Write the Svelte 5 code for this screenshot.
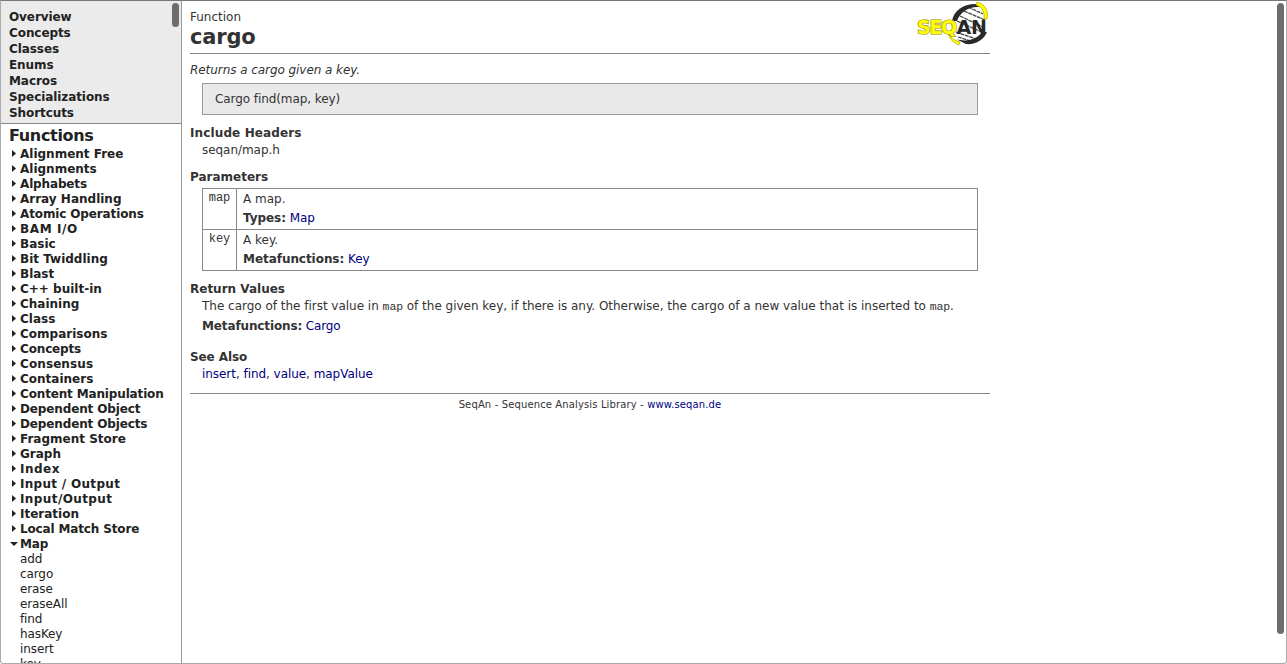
<script>
  const top = ['Overview', 'Concepts', 'Classes', 'Enums', 'Macros', 'Specializations', 'Shortcuts'];
  const groups = ['Alignment Free', 'Alignments', 'Alphabets', 'Array Handling', 'Atomic Operations', 'BAM I/O', 'Basic', 'Bit Twiddling', 'Blast', 'C++ built-in', 'Chaining', 'Class', 'Comparisons', 'Concepts', 'Consensus', 'Containers', 'Content Manipulation', 'Dependent Object', 'Dependent Objects', 'Fragment Store', 'Graph', 'Index', 'Input / Output', 'Input/Output', 'Iteration', 'Local Match Store', 'Map'];
  const spacing = { 'Atomic Operations': -0.13, 'BAM I/O': 0.6, 'Content Manipulation': -0.15, 'Dependent Object': -0.13, 'Dependent Objects': -0.13, 'Index': 0.5, 'Input / Output': 0.3, 'Input/Output': 0.4, 'Local Match Store': -0.15, 'Concepts': -0.15, 'Consensus': 0.1, 'Alphabets': -0.15, 'Map': -0.2 };
  const members = ['add', 'cargo', 'erase', 'eraseAll', 'find', 'hasKey', 'insert', 'key'];
  const params = [
    { name: 'map', text: 'A map.', label: 'Types:', link: 'Map' },
    { name: 'key', text: 'A key.', label: 'Metafunctions:', link: 'Key' }
  ];
  const related = ['insert', 'find', 'value', 'mapValue'];
</script>

<div class="window">
  <aside>
    <nav class="top">
      {#each top as item}<div>{item}</div>{/each}
      <i class="thumb small"></i>
    </nav>
    <h2>Functions</h2>
    <div class="tree">
      {#each groups as g}
        <div class="group">
          <svg width="11" height="15" viewBox="0 0 11 15">
            {#if g === 'Map'}<path d="M1 5H9L5 9Z" fill="#222" />{:else}<path d="M3 3V10L7 6.5Z" fill="#222" />{/if}
          </svg><b style:letter-spacing="{spacing[g] ?? 0}px">{g}</b>
        </div>
      {/each}
      {#each members as m}<div class="member">{m}</div>{/each}
    </div>
  </aside>
  <main>
    <header>
      <div>
        <div class="kind">Function</div>
        <h1>cargo</h1>
      </div>
      <svg class="logo" width="74" height="46" viewBox="0 0 74 46">
        <path d="M37 33C33 20 42 5 61 5C72 14 70 34 56 40C50 42 43 39 37 33Z" fill="#fff" />
        <path d="M51 6L66 13M47 10L68 19M43 15L66 26M40 20L67 32M39 31L59 38M41 36L57 41" stroke="#444" stroke-width="1.3" stroke-dasharray="4 .7" />
        <path d="M35 20C37 9 47 2 61 3L63 6C52 5 43 11 40 20Z" fill="#292929" />
        <path d="M39 38C51 42 61 37 65 31L70 31C67 39 58 44 49 43Z" fill="#292929" />
        <path d="M60 1C68 3 72 10 70 18L67 18C68 11 65 6 59 4Z" fill="#ff0" stroke="#aaa000" stroke-width=".7" />
        <path d="M31 31C33 36 36 39 43 41L42 44C35 41 32 37 31 31Z" fill="#ff0" stroke="#aaa000" stroke-width=".7" />
        <text y="33" class="mark"><tspan x="0 12.5 24" class="seq">SEQ</tspan><tspan x="39.5 54" class="an">AN</tspan></text>
      </svg>
    </header>
    <p class="summary">Returns a cargo given a key.</p>
    <div class="code">Cargo find(map, key)</div>
    <h3 class="include">Include Headers</h3>
    <div class="body">seqan/map.h</div>
    <h3 class="parameters">Parameters</h3>
    <div class="table">
      {#each params as p}
        <div class="row">
          <div class="name">{p.name}</div>
          <div class="desc"><div>{p.text}</div><div class="meta"><b>{p.label}</b> <span class="link">{p.link}</span></div></div>
        </div>
      {/each}
    </div>
    <h3 class="returns">Return Values</h3>
    <div class="body sentence">The cargo of the first value in <code>map</code> of the given key, if there is any. Otherwise, the cargo of a new value that is inserted to <code>map</code>.</div>
    <div class="body meta"><b>Metafunctions:</b> <span class="link">Cargo</span></div>
    <h3 class="see">See Also</h3>
    <div class="body">{#each related as r, i}{i ? ', ' : ''}<span class="link">{r}</span>{/each}</div>
    <footer>SeqAn - Sequence Analysis Library - <span class="link">www.seqan.de</span></footer>
  </main>
  <i class="thumb large"></i>
</div>

<style>
  .window { position: relative; box-sizing: border-box; width: 1287px; height: 664px; overflow: hidden; display: flex; background: #fff; border: 1px solid #aaa; border-top-color: #777; border-radius: 0 0 3px 3px; font: 12px/16px Verdana, "DejaVu Sans", sans-serif; color: #333; }
  aside { position: relative; flex: none; width: 180px; border-right: 1px solid #999; overflow: hidden; color: #222; }
  .top { height: 114px; padding: 8px 0 0 8px; background: #ebebeb; border-bottom: 1px solid #888; font-weight: bold; letter-spacing: -.08px; }
  .thumb { position: absolute; width: 7px; border-radius: 4px; background: #6d6d6d; }
  .small { right: 2px; top: 2px; height: 24px; }
  .large { right: 2px; top: 2px; height: 631px; }
  h2 { margin: 0; padding: 3px 0 0 8px; font-size: 16px; line-height: 18px; height: 20px; letter-spacing: -.33px; }
  .tree { padding-left: 8px; line-height: 15px; }
  .group { display: flex; height: 15px; white-space: nowrap; }
  .member { padding-left: 11px; height: 15px; letter-spacing: -.1px; }
  main { width: 800px; padding-left: 8px; }
  header { display: flex; justify-content: space-between; height: 52px; border-bottom: 1px solid #888; }
  .kind { padding-top: 8px; }
  h1 { margin: 0; font-size: 21px; line-height: 25px; letter-spacing: -.2px; }
  .logo { margin-right: -1px; }
  .mark { font: bold 19px "DejaVu Sans", sans-serif; }
  .seq { fill: #ff0; stroke: #8f8800; stroke-width: 1.2; paint-order: stroke; }
  .an { fill: #292929; }
  .summary { margin: 8px 0 5px; font-style: italic; letter-spacing: -.06px; }
  .code { box-sizing: border-box; height: 32px; margin: 0 12px; padding: 7px 12px; background: #e9e9e9; border: 1px solid #999; letter-spacing: -.08px; }
  h3 { margin: 0; font-size: 12px; line-height: 16px; }
  .include { margin-top: 10px; letter-spacing: .12px; }
  .body { padding-left: 12px; line-height: 18px; height: 17px; white-space: nowrap; letter-spacing: -.05px; }
  .parameters { margin-top: 11px; margin-bottom: 3px; }
  .table { margin: 0 12px; border: 1px solid #888; }
  .row { display: flex; height: 40px; }
  .row + .row { border-top: 1px solid #888; }
  .name { width: 34px; box-sizing: border-box; padding-top: 1px; border-right: 1px solid #888; text-align: center; font: 12px/16px "Liberation Mono", monospace; }
  .desc { padding: 2px 6px; }
  .desc .meta { padding-top: 3px; letter-spacing: -.05px; }
  .returns { margin-top: 10px; }
  .sentence { letter-spacing: 0; }
  code { font: 11.5px/12px "Liberation Mono", monospace; letter-spacing: -.1px; color: #333; }
  .sentence { letter-spacing: -.016px; }
  .body.meta { margin-top: 3px; letter-spacing: -.13px; }
  .see { margin-top: 15px; letter-spacing: -.1px; }
  .link { color: #000080; }
  footer { margin-top: 11px; padding-top: 3px; border-top: 1px solid #888; text-align: center; font-size: 10px; letter-spacing: .13px; }
</style>
